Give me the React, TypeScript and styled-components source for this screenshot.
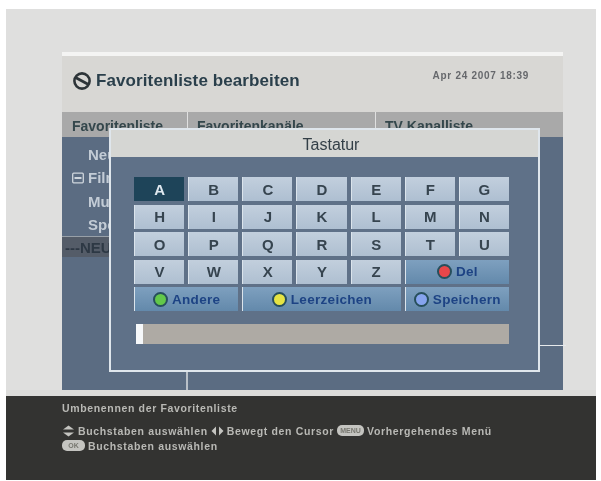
import React from "react";
import styled, { createGlobalStyle } from "styled-components";

const Global = createGlobalStyle`
  html, body { margin: 0; padding: 0; background: #fff; }
  body { width: 601px; height: 481px; overflow: hidden; font-family: "Liberation Sans", Arial, sans-serif; }
`;

const Screen = styled.div`
  position: relative;
  margin: 9px 0 0 6px;
  width: 590px;
  height: 471px;
  padding-top: 43px;
  box-sizing: border-box;
  background: #dfdfde;
  display: flex;
  flex-direction: column;
  filter: blur(0.7px);
  overflow: hidden;
`;

const Panel = styled.div`
  position: relative;
  margin-left: 56px;
  width: 501px;
  height: 338px;
  box-sizing: border-box;
  border-top: 4px solid #f4f4f3;
  display: flex;
  flex-direction: column;
  background: #d8d7d4;
`;

const Header = styled.header`
  height: 56px;
  display: flex;
  align-items: center;
  justify-content: space-between;
  padding: 0 34px 0 10px;
  box-sizing: border-box;
`;

const TitleGroup = styled.div`
  display: flex;
  align-items: center;
  gap: 4px;
  margin-top: -6px;
`;

const Title = styled.h1`
  margin: 0;
  font-size: 17px;
  font-weight: 700;
  color: #2a3f4b;
  letter-spacing: 0.1px;
`;

const Clock = styled.span`
  font-size: 10px;
  font-weight: 700;
  color: #66686c;
  letter-spacing: 0.7px;
  margin-top: -17px;
`;

const Tabs = styled.div`
  height: 25px;
  background: #a9a9a9;
  display: grid;
  grid-template-columns: 125px 188px 1fr;
`;

const Tab = styled.div<{ $divider?: boolean }>`
  padding: 6px 0 0 ${(p) => (p.$divider ? "9px" : "10px")};
  border-left: ${(p) => (p.$divider ? "1px solid #e0e0e0" : "none")};
  font-size: 14px;
  font-weight: 700;
  color: #34474c;
  white-space: nowrap;
`;

const Content = styled.div`
  position: relative;
  flex: 1;
  background: #5b6c82;
  display: grid;
  grid-template-columns: 126px 1fr;
`;

const ListColumn = styled.div`
  border-right: 2px solid #b9c0c8;
  padding-top: 6px;
  box-sizing: border-box;
`;

const ListRow = styled.div<{ $selected?: boolean }>`
  height: ${(p) => (p.$selected ? "20px" : "23.3px")};
  display: flex;
  align-items: center;
  gap: 4px;
  padding-left: ${(p) => (p.$selected ? "3px" : "10px")};
  font-size: 15px;
  font-weight: 700;
  color: ${(p) => (p.$selected ? "#2d3844" : "#c3ccd6")};
  background: ${(p) => (p.$selected ? "#545c68" : "transparent")};
  border-top: ${(p) => (p.$selected ? "1px solid #98a0a8" : "none")};
`;

const IconSlot = styled.span`
  width: 12px;
  height: 12px;
  display: inline-flex;
  flex: none;
`;

const RightRule = styled.div`
  position: absolute;
  top: 208px;
  right: -3px;
  width: 26px;
  height: 1px;
  background: #e6e9ec;
`;

const Dialog = styled.section`
  position: absolute;
  left: 47px;
  top: 72px;
  width: 431px;
  height: 244px;
  box-sizing: border-box;
  border: 2px solid #dfe6ec;
  background: #5f7188;
  display: flex;
  flex-direction: column;
`;

const DialogTitle = styled.div`
  height: 27px;
  padding: 2px 0 0 13px;
  box-sizing: border-box;
  background: #d5d6d3;
  display: flex;
  align-items: center;
  justify-content: center;
  font-size: 16px;
  font-weight: 400;
  color: #333f47;
  flex: none;
`;

const DialogBody = styled.div`
  padding: 20px 29px 0 23px;
`;

const Keys = styled.div`
  display: grid;
  grid-template-columns: repeat(7, 1fr);
  grid-auto-rows: 24px;
  gap: 3.5px 4px;
`;

const Key = styled.div<{ $active?: boolean; $span?: number; $action?: boolean }>`
  grid-column: span ${(p) => p.$span ?? 1};
  display: flex;
  align-items: center;
  justify-content: center;
  gap: 4px;
  box-sizing: border-box;
  font-size: ${(p) => (p.$action ? "13.5px" : "15px")};
  font-weight: 700;
  letter-spacing: ${(p) => (p.$action ? "0.3px" : "0")};
  color: ${(p) => (p.$active ? "#dfe8ef" : p.$action ? "#1d4384" : "#36444f")};
  background: ${(p) =>
    p.$active
      ? "#1e4459"
      : p.$action
        ? "linear-gradient(#7ea0bf, #6389ab)"
        : "linear-gradient(#c2cfdd, #aebfd1)"};
  border-left: 1px solid ${(p) => (p.$active ? "#1e4459" : "#dbe4ec")};
`;

const Dot = styled.span<{ $color: string }>`
  width: 15px;
  height: 15px;
  box-sizing: border-box;
  flex: none;
  border-radius: 50%;
  background: ${(p) => p.$color};
  border: 2px solid #274f5c;
`;

const Input = styled.div`
  margin: 13px 0 0 2px;
  height: 20px;
  background: #aeaaa4;
  display: flex;
`;

const Caret = styled.span`
  width: 7px;
  background: #f6f8fa;
`;

const Gap = styled.div`
  height: 6px;
  background: #dcdcda;
  flex: none;
`;

const Footer = styled.footer`
  flex: 1;
  background: #333331;
  padding: 6px 0 0 56px;
  color: #b9b9b5;
  font-size: 10.5px;
  font-weight: 700;
  letter-spacing: 0.65px;
`;

const Hint = styled.div`
  margin-bottom: 9px;
  white-space: nowrap;
`;

const HelpLine = styled.div`
  display: flex;
  align-items: center;
  gap: 3px;
  height: 15px;
  white-space: nowrap;
`;

const Badge = styled.span<{ $w: number }>`
  width: ${(p) => p.$w}px;
  height: 11px;
  border-radius: 5px;
  background: #c4c4c0;
  color: #77776f;
  font-size: 7px;
  line-height: 11px;
  text-align: center;
  letter-spacing: 0;
  flex: none;
`;

const keyRows = ["ABCDEFG", "HIJKLMN", "OPQRSTU"];

function NoEntryIcon() {
  return (
    <svg width="20" height="20" viewBox="0 0 20 20" fill="none">
      <circle cx="10" cy="10" r="7.6" stroke="#2d3438" strokeWidth="2.6" />
      <path d="M3.5 6.5 L16.5 13.5" stroke="#2d3438" strokeWidth="2.8" />
    </svg>
  );
}

function FolderIcon() {
  return (
    <svg width="12" height="12" viewBox="0 0 12 12" fill="none">
      <rect x="0.7" y="1.2" width="10.6" height="9.6" rx="1" stroke="#cfd6dd" strokeWidth="1.3" />
      <rect x="2.5" y="5" width="7" height="2" fill="#cfd6dd" />
    </svg>
  );
}

function UpDownIcon() {
  return (
    <svg width="13" height="12" viewBox="0 0 13 12" fill="#c4c4c0">
      <path d="M6.5 0.5 L12 4.5 H1 Z" />
      <path d="M6.5 11.5 L12 7.5 H1 Z" />
    </svg>
  );
}

function LeftRightIcon() {
  return (
    <svg width="13" height="10" viewBox="0 0 13 10" fill="#c4c4c0">
      <path d="M5 0.5 V9.5 L0.5 5 Z" />
      <path d="M8 0.5 V9.5 L12.5 5 Z" />
    </svg>
  );
}

export default function App() {
  return (
    <>
      <Global />
      <Screen>
        <Panel>
          <Header>
            <TitleGroup>
              <NoEntryIcon />
              <Title>Favoritenliste bearbeiten</Title>
            </TitleGroup>
            <Clock>Apr 24 2007 18:39</Clock>
          </Header>
          <Tabs>
            <Tab>Favoritenliste</Tab>
            <Tab $divider>Favoritenkanäle</Tab>
            <Tab $divider>TV Kanalliste</Tab>
          </Tabs>
          <Content>
            <ListColumn>
              <ListRow><IconSlot />Neu</ListRow>
              <ListRow><IconSlot><FolderIcon /></IconSlot>Film</ListRow>
              <ListRow><IconSlot />Musik</ListRow>
              <ListRow><IconSlot />Sport</ListRow>
              <ListRow $selected>---NEU</ListRow>
            </ListColumn>
            <div />
            <RightRule />
          </Content>
          <Dialog>
            <DialogTitle>Tastatur</DialogTitle>
            <DialogBody>
              <Keys>
                {keyRows.flatMap((row) =>
                  row.split("").map((c) => (
                    <Key key={c} $active={c === "A"}>{c}</Key>
                  ))
                )}
                {"VWXYZ".split("").map((c) => (
                  <Key key={c}>{c}</Key>
                ))}
                <Key $span={2} $action><Dot $color="#e8474a" />Del</Key>
                <Key $span={2} $action><Dot $color="#62c84a" />Andere</Key>
                <Key $span={3} $action><Dot $color="#e6e444" />Leerzeichen</Key>
                <Key $span={2} $action><Dot $color="#86a4ee" />Speichern</Key>
              </Keys>
              <Input><Caret /></Input>
            </DialogBody>
          </Dialog>
        </Panel>
        <Gap />
        <Footer>
          <Hint>Umbenennen der Favoritenliste</Hint>
          <HelpLine>
            <UpDownIcon />
            Buchstaben auswählen
            <LeftRightIcon />
            Bewegt den Cursor
            <Badge $w={27}>MENU</Badge>
            Vorhergehendes Menü
          </HelpLine>
          <HelpLine>
            <Badge $w={23}>OK</Badge>
            Buchstaben auswählen
          </HelpLine>
        </Footer>
      </Screen>
    </>
  );
}
